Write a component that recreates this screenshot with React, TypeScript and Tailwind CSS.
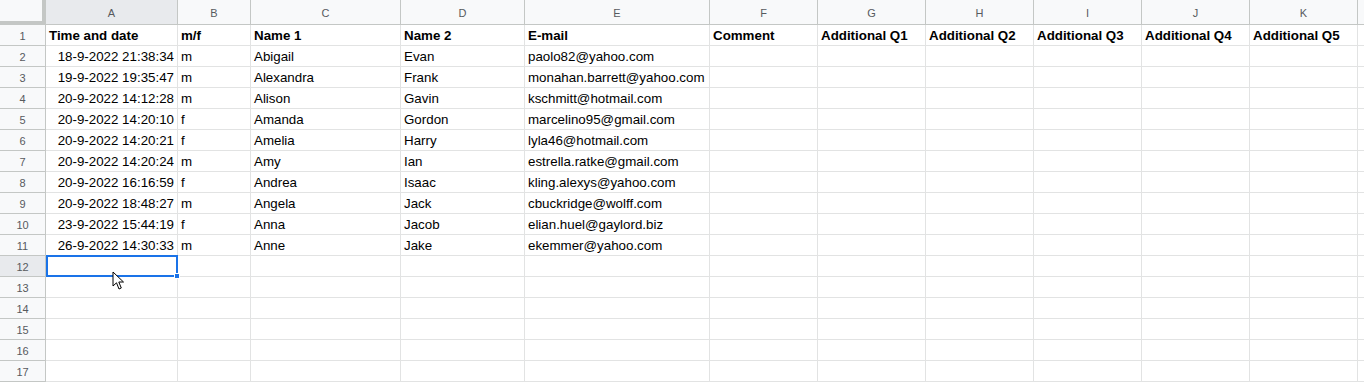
import React from "react";

const cols = [
  { l: "A", w: 132 },
  { l: "B", w: 73 },
  { l: "C", w: 150 },
  { l: "D", w: 124 },
  { l: "E", w: 185 },
  { l: "F", w: 108 },
  { l: "G", w: 108 },
  { l: "H", w: 108 },
  { l: "I", w: 108 },
  { l: "J", w: 108 },
  { l: "K", w: 108 },
];

const header = ["Time and date", "m/f", "Name 1", "Name 2", "E-mail", "Comment", "Additional Q1", "Additional Q2", "Additional Q3", "Additional Q4", "Additional Q5"];

const data: string[][] = [
  ["18-9-2022 21:38:34", "m", "Abigail", "Evan", "paolo82@yahoo.com"],
  ["19-9-2022 19:35:47", "m", "Alexandra", "Frank", "monahan.barrett@yahoo.com"],
  ["20-9-2022 14:12:28", "m", "Alison", "Gavin", "kschmitt@hotmail.com"],
  ["20-9-2022 14:20:10", "f", "Amanda", "Gordon", "marcelino95@gmail.com"],
  ["20-9-2022 14:20:21", "f", "Amelia", "Harry", "lyla46@hotmail.com"],
  ["20-9-2022 14:20:24", "m", "Amy", "Ian", "estrella.ratke@gmail.com"],
  ["20-9-2022 16:16:59", "f", "Andrea", "Isaac", "kling.alexys@yahoo.com"],
  ["20-9-2022 18:48:27", "m", "Angela", "Jack", "cbuckridge@wolff.com"],
  ["23-9-2022 15:44:19", "f", "Anna", "Jacob", "elian.huel@gaylord.biz"],
  ["26-9-2022 14:30:33", "m", "Anne", "Jake", "ekemmer@yahoo.com"],
];

function Cursor() {
  return (
    <svg width="14" height="20" viewBox="0 0 14 20" className="absolute left-[66px] top-[15px] z-20">
      <path d="M1 1 L1 15 L4.5 11.8 L7 18 L9.3 17 L6.8 11 L11.5 11 Z" fill="#fff" stroke="#000" strokeWidth="1" strokeLinejoin="round" />
    </svg>
  );
}

export default function App() {
  const rows: { kind: "head" | "data" | "empty"; cells: string[] }[] = [
    { kind: "head", cells: header },
    ...data.map((d) => ({ kind: "data" as const, cells: d })),
    ...Array.from({ length: 6 }, () => ({ kind: "empty" as const, cells: [] as string[] })),
  ];
  return (
    <div className="w-[1364px] h-[383px] overflow-hidden bg-white font-['Liberation_Sans',Arial,sans-serif] text-[13.33px] text-black select-none">
      {/* column header row */}
      <div className="flex h-[25px]">
        <div className="relative w-[46px] shrink-0 bg-[#f8f9fa] border-r border-b border-[#c4c7c5]">
          <div className="absolute right-[-1px] top-0 h-[25px] w-[4px] bg-[#c4c7c5]" />
          <div className="absolute bottom-[-1px] left-0 h-[4px] w-[46px] bg-[#c4c7c5]" />
        </div>
        {cols.map((c, i) => (
          <div
            key={c.l}
            style={{ width: c.w }}
            className={`shrink-0 flex items-center justify-center pt-[2px] border-r border-b border-[#c4c7c5] text-[11px] text-[#575a5e] ${i === 0 ? "bg-[#e8eaed]" : "bg-[#f8f9fa]"}`}
          >
            {c.l}
          </div>
        ))}
        <div className="flex-1 bg-[#f8f9fa] border-b border-[#c4c7c5]" />
      </div>
      {rows.map((r, ri) => {
        const n = ri + 1;
        const sel = n === 12;
        return (
          <div key={ri} className="flex h-[21px]">
            <div
              className={`w-[46px] shrink-0 flex items-center justify-center pt-[2px] border-r border-b border-[#c4c7c5] text-[11px] text-[#575a5e] ${sel ? "bg-[#e8eaed]" : "bg-[#f8f9fa]"}`}
            >
              {n}
            </div>
            {cols.map((c, ci) => {
              const txt = r.cells[ci] ?? "";
              const right = r.kind === "data" && ci === 0;
              return (
                <div
                  key={c.l}
                  style={{ width: c.w }}
                  className={`relative shrink-0 flex items-center pt-[1px] whitespace-nowrap overflow-visible leading-[16px] border-r border-b border-[#e2e3e3] ${right ? "justify-end pr-[3px]" : "pl-[3px]"} ${r.kind === "head" ? "font-bold" : ""}`}
                >
                  {txt}
                  {sel && ci === 0 && (
                    <>
                      <div className="absolute left-0 right-[-1px] top-[-1px] bottom-[-1px] border-2 border-[#1a73e8] z-10" />
                      <div className="absolute right-[-3px] bottom-[-3px] w-[6px] h-[6px] bg-[#1a73e8] border border-white z-10" />
                      <Cursor />
                    </>
                  )}
                </div>
              );
            })}
            <div className="flex-1 border-b border-[#e2e3e3]" />
          </div>
        );
      })}
    </div>
  );
}
